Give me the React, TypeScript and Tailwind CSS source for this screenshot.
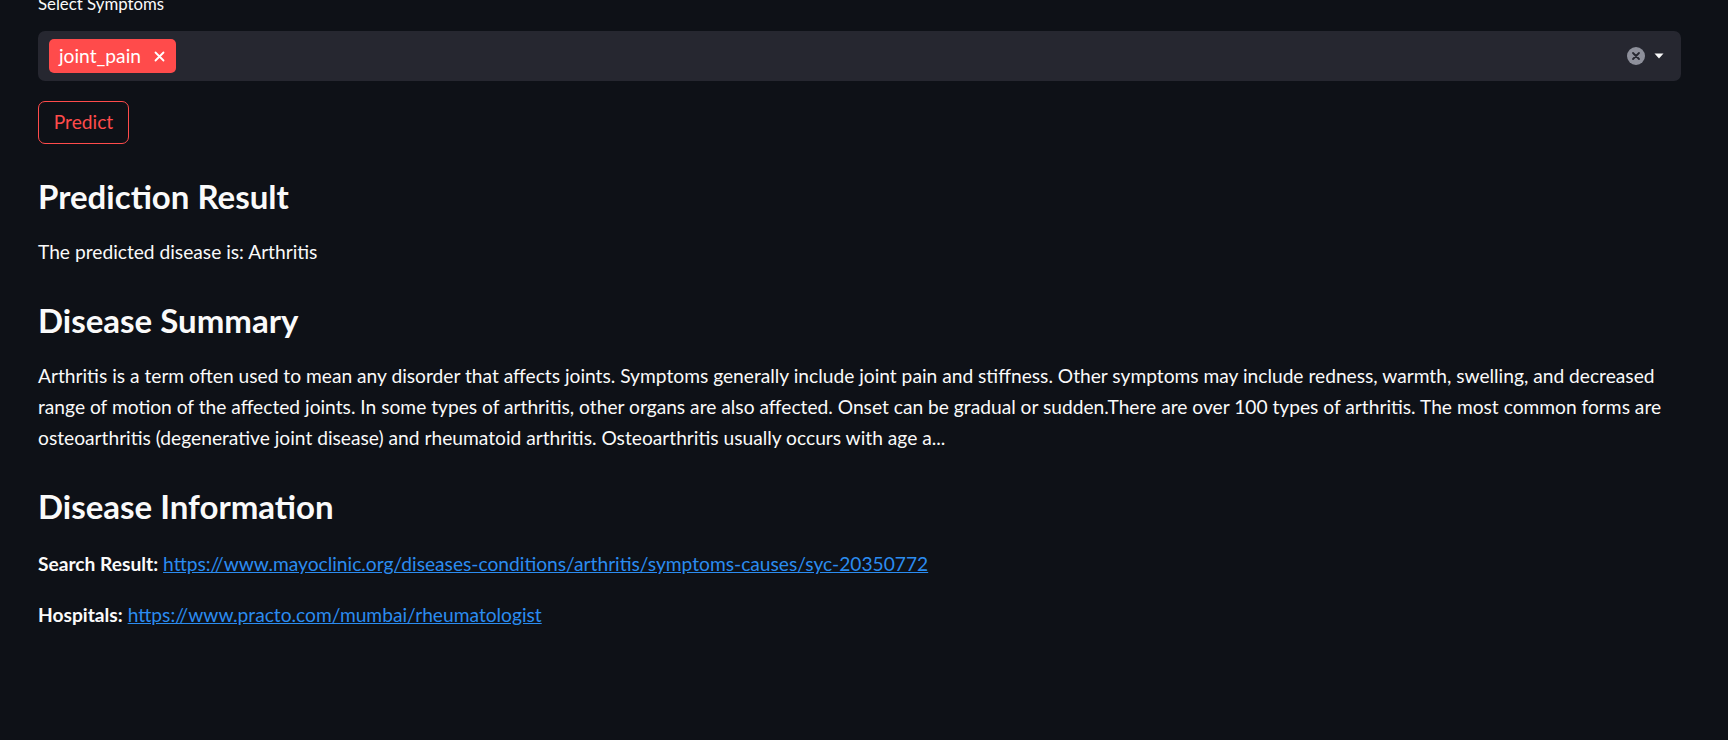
export default function App() {
  return (
    <div className="min-h-screen w-full overflow-hidden bg-[#0e1117] text-[#fafafa] font-['Lato','Open_Sans',sans-serif]">
      <div className="pl-[38px] pr-[47px]">
        {/* 症状选择 */}
        <div className="-mt-[10px] h-[28px] text-[16.8px] leading-[28px]">Select Symptoms</div>

        <div className="mt-[13px] flex h-[50px] items-center rounded-[7px] bg-[#262730] pl-[11px] pr-[17px]">
          <div className="flex h-[34px] items-center rounded-[5px] bg-[#ff4b4b] pl-[10px] pr-[11px] text-[19.2px] text-white">
            <span>joint_pain</span>
            <svg className="ml-[13px]" width="11" height="11" viewBox="0 0 11 11">
              <path d="M1.5 1.5 L9.5 9.5 M9.5 1.5 L1.5 9.5" stroke="white" strokeWidth="1.8" strokeLinecap="round" />
            </svg>
          </div>
          <div className="flex-1" />
          <svg width="18" height="18" viewBox="0 0 18 18">
            <circle cx="9" cy="9" r="9" fill="#8e909b" />
            <path d="M6 6 L12 12 M12 6 L6 12" stroke="#262730" strokeWidth="1.8" strokeLinecap="round" />
          </svg>
          <svg className="ml-[9px]" width="10" height="6" viewBox="0 0 10 6">
            <path d="M0.5 0.5 L9.5 0.5 L5 5.5 Z" fill="#fafafa" />
          </svg>
        </div>

        <button className="mt-[20px] flex h-[43px] w-[91px] items-center justify-center rounded-[7px] border border-[#ff4b4b] bg-transparent text-[19.2px] text-[#ff4b4b]">
          Predict
        </button>

        {/* 预测结果 */}
        <h3 className="mt-[31.6px] h-[40px] text-[33px] font-bold leading-[40px]">Prediction Result</h3>
        <p className="mt-[21.6px] text-[19.2px] leading-[30.72px]">The predicted disease is: Arthritis</p>

        <h3 className="mt-[31.6px] h-[40px] text-[33px] font-bold leading-[40px]">Disease Summary</h3>
        <p className="mt-[20.4px] text-[19.2px] leading-[31px]">
          Arthritis is a term often used to mean any disorder that affects joints. Symptoms generally include joint pain and stiffness. Other symptoms may include redness, warmth, swelling, and decreased range of motion of the affected joints. In some types of arthritis, other organs are also affected. Onset can be gradual or sudden.There are over 100 types of arthritis. The most common forms are osteoarthritis (degenerative joint disease) and rheumatoid arthritis. Osteoarthritis usually occurs with age a...
        </p>

        <h3 className="mt-[33.6px] h-[40px] text-[33px] font-bold leading-[40px]">Disease Information</h3>
        <p className="mt-[22.6px] text-[19.2px] leading-[30.72px]">
          <strong className="font-bold">Search Result:</strong>{" "}
          <a href="#" className="text-[#2b8cf0] underline">https://www.mayoclinic.org/diseases-conditions/arthritis/symptoms-causes/syc-20350772</a>
        </p>
        <p className="mt-[20.2px] text-[19.2px] leading-[30.72px]">
          <strong className="font-bold">Hospitals:</strong>{" "}
          <a href="#" className="text-[#2b8cf0] underline">https://www.practo.com/mumbai/rheumatologist</a>
        </p>
      </div>
    </div>
  );
}
